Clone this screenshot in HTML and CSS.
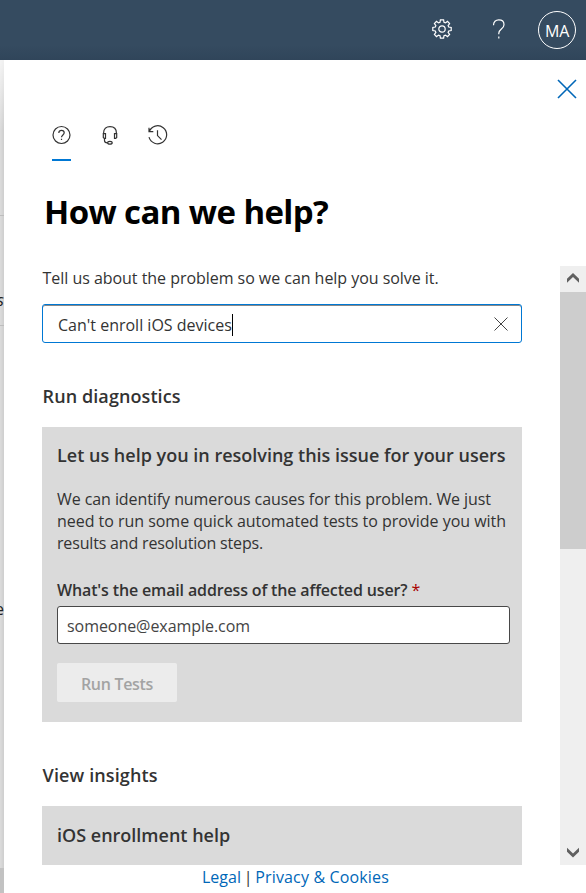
FILE: index.html
```html
<!DOCTYPE html>
<html lang="en">
<head>
<meta charset="utf-8">
<title>Help and support</title>
<link rel="stylesheet" href="styles.css">
</head>
<body>
<header class="topbar">
  <svg class="gear" viewBox="0 0 20 20" width="20" height="20"><path d="M8.4 .8h3.2l.4 2.5 1.4.6 2.1-1.5 2.1 2.1-1.5 2.1.6 1.4 2.5.4v3.2l-2.5.4-.6 1.4 1.5 2.1-2.1 2.1-2.1-1.5-1.4.6-.4 2.5H8.4l-.4-2.5-1.4-.6-2.1 1.5-2.1-2.1 1.5-2.1-.6-1.4L.8 11.6V8.4l2.5-.4.6-1.4-1.5-2.1 2.1-2.1 2.1 1.5 1.4-.6z"/><circle cx="10" cy="10" r="3.2"/></svg>
  <svg class="question" viewBox="0 0 14 20" width="14" height="20"><path d="M1.500 6.200C1.500 2.800 3.700.9 6.800.9s5.200 1.900 5.200 4.800c0 4.300-5.200 4.300-5.200 8.500v1"/><path d="M6.800 17.600v1.800"/></svg>
  <span class="avatar">MA</span>
</header>
<div class="stage">
  <aside class="backdrop">
    <span class="rule rule-top"></span>
    <span class="peek peek-top">s</span>
    <span class="rule rule-mid"></span>
    <span class="peek peek-low">e</span>
    <span class="backdrop-foot"></span>
  </aside>
  <main class="panel">
    <svg class="close" viewBox="0 0 20 20" width="20" height="20"><path d="M1 1l18 18M19 1L1 19"/></svg>
    <nav class="tabs">
      <span class="tab active"><svg viewBox="0 0 20 20" width="20" height="20"><circle cx="9.500" cy="10" r="8.500"/><path d="M6.800 8c0-1.700 1.100-2.700 2.700-2.700s2.700 1 2.700 2.500c0 2.100-2.700 2.200-2.700 4.500M9.500 13.700v1.300"/></svg></span>
      <span class="tab"><svg viewBox="0 0 20 20" width="20" height="20"><path d="M3.600 9V8C3.600 4 6.200 1.600 10 1.600S16.400 4 16.400 8v1"/><path d="M3.300 8.600h2.200v4.800H4.300L3.300 12.400zM16.700 8.600h-2.200v4.800h1.200l1-1z"/><path d="M4.500 13.500v2c0 1.500.9 2.300 2.800 2.300"/><ellipse cx="9.900" cy="17.800" rx="2.300" ry="1.400"/></svg></span>
      <span class="tab"><svg viewBox="0 0 20 20" width="20" height="20"><path d="M1 2.700v4h4.300M1.200 6.700A9 9 0 1 1 1 12.200M9.500 5.200v5.400l4 4"/></svg></span>
    </nav>
    <h1>How can we help?</h1>
    <div class="scroller">
      <div class="content">
        <p class="intro">Tell us about the problem so we can help you solve it.</p>
        <div class="search"><span>Can't enroll iOS devices</span><i class="caret"></i>
          <svg class="clear" viewBox="0 0 16 16" width="16" height="16"><path d="M1.500 1.500l13 13M14.500 1.500l-13 13"/></svg>
        </div>
        <h2 class="run-title">Run diagnostics</h2>
        <section class="card">
          <h3>Let us help you in resolving this issue for your users</h3>
          <p class="copy"><span class="line-a">We can identify numerous causes for this problem. We just</span><br>need to run some quick automated tests to provide you with<br><span class="line-c">results and resolution steps.</span></p>
          <div class="label">What's the email address of the affected user? <b>*</b></div>
          <div class="email">someone@example.com</div>
          <div class="button">Run Tests</div>
        </section>
        <h2 class="view-title">View insights</h2>
        <section class="card insight"><h3>iOS enrollment help</h3></section>
      </div>
      <div class="scrollbar">
        <svg viewBox="0 0 26 26" width="26" height="26"><path d="M7 12.800l6-5.800 6 5.800v4l-6-5.800-6 5.800z"/></svg>
        <span class="thumb"></span>
        <svg class="down" viewBox="0 0 26 26" width="26" height="26"><path d="M7 8.800l6 5.800 6-5.800v4l-6 5.800-6-5.800z"/></svg>
      </div>
    </div>
    <footer><a>Legal</a> | <a class="privacy">Privacy &amp; Cookies</a></footer>
  </main>
</div>
</body>
</html>
```
FILE: styles.css
```css
* { box-sizing: border-box; }
body {
  margin: 0;
  height: 893px;
  overflow: hidden;
  font: 16px/22px "Open Sans", "Noto Sans", sans-serif;
  color: #333;
  background: #fff;
}
h1, h2, h3, p { margin: 0; }
svg { display: block; fill: none; flex: none; }
.topbar {
  height: 60px;
  display: flex;
  align-items: center;
  justify-content: flex-end;
  padding-right: 10px;
  background: linear-gradient(#354b60 0, #354b60 45px, #30455a 60px);
}
.gear { stroke: #fff; stroke-width: 1.2; margin: 0 40px 3px 0; }
.question { stroke: #fff; stroke-width: 1.2; margin: 0 32px 3px 0; }
.avatar {
  width: 38px;
  height: 38px;
  border: 1px solid #fff;
  border-radius: 50%;
  color: #fff;
  font-size: 16px;
  line-height: 39px;
  text-align: center;
  letter-spacing: -.2px;
}
.stage { display: flex; height: 833px; }
.backdrop {
  width: 4px;
  overflow: hidden;
  display: flex;
  flex-direction: column;
  background: linear-gradient(rgba(255,255,255,.7), rgba(255,255,255,0) 70px), linear-gradient(90deg, #dcdcdc, #cecece);
}
.rule { height: 1px; background: #bdbdbd; flex: none; }
.rule-top { margin-top: 155px; }
.rule-mid { margin-top: 14px; }
.peek { height: 22px; display: flex; justify-content: flex-end; color: #222; flex: none; }
.peek-top { margin-top: 73px; font-style: italic; }
.peek-low { margin-top: 272px; }
.backdrop-foot { margin-top: auto; height: 25px; background: #c2c2c2; }
.panel { width: 582px; display: flex; flex-direction: column; background: #fff; }
.close { stroke: #0067b8; stroke-width: 1.6; margin: 19px 9px 0 auto; }
.tabs { display: flex; gap: 28px; margin: 26px 0 0 48px; height: 36px; }
.tab { width: 20px; height: 36px; }
.tab svg { stroke: #333; stroke-width: 1.2; }
.tab.active { border-bottom: 2px solid #0078d4; width: 19px; margin-right: 1px; }
h1 {
  margin: 28px 0 0 40px;
  font-size: 33px;
  line-height: 46px;
  font-weight: 700;
  letter-spacing: -.6px;
  color: #000;
}
.scroller { display: flex; height: 599px; margin-top: 31px; overflow: hidden; }
.content { width: 480px; margin-left: 38px; }
.intro { margin: 1px 0 0 .6px; letter-spacing: -.04px; }
.search {
  margin-top: 15px;
  height: 39px;
  display: flex;
  align-items: center;
  padding: 2px 12px 0 15px;
  border: 1px solid #0078d4;
  border-radius: 3px;
  box-shadow: inset 0 1px #888;
}
.caret { width: 1px; height: 22px; background: #000; }
.clear { stroke: #444; stroke-width: 1; margin: 0 0 2px auto; }
h2, h3 { font-size: 18px; line-height: 24px; font-weight: 600; }
.run-title { margin: 41px 0 0 .6px; letter-spacing: .085px; }
.view-title { margin: 41px 0 0 .6px; letter-spacing: .117px; }
.card {
  height: 295px;
  margin-top: 19px;
  padding: 16px 12px 0 15px;
  background: #dadada;
}
.card h3, .copy { white-space: nowrap; }
.copy { margin-top: 21px; letter-spacing: -.03px; }
.line-a { letter-spacing: -.077px; }
.line-c { letter-spacing: -.173px; }
.label { margin-top: 25px; font-weight: 600; letter-spacing: -.147px; }
.label b { color: #a80000; font-weight: 400; }
.email {
  margin-top: 5px;
  height: 38px;
  padding-left: 9px;
  line-height: 38px;
  border: 1px solid #484848;
  border-radius: 3px;
  background: #fff;
  color: #444;
  letter-spacing: -.053px;
}
.button {
  width: 120px;
  height: 39px;
  margin-top: 19px;
  border-radius: 2px;
  background: #ececec;
  color: #a3a3a3;
  font-weight: 600;
  line-height: 42px;
  text-align: center;
  letter-spacing: -.3px;
}
.insight { margin-top: 19px; padding-top: 17px; }
.scrollbar {
  width: 26px;
  margin-left: auto;
  display: flex;
  flex-direction: column;
  background: #efefef;
}
.scrollbar svg { fill: #606060; }
.thumb { height: 257px; background: #cdcdcd; }
.scrollbar .down { margin-top: auto; }
footer { margin-top: 1px; padding-left: 198px; letter-spacing: 0; word-spacing: -1.4px; white-space: pre; }
footer a { color: #0067b8; }
.privacy { letter-spacing: .15px; word-spacing: 0; }
```
